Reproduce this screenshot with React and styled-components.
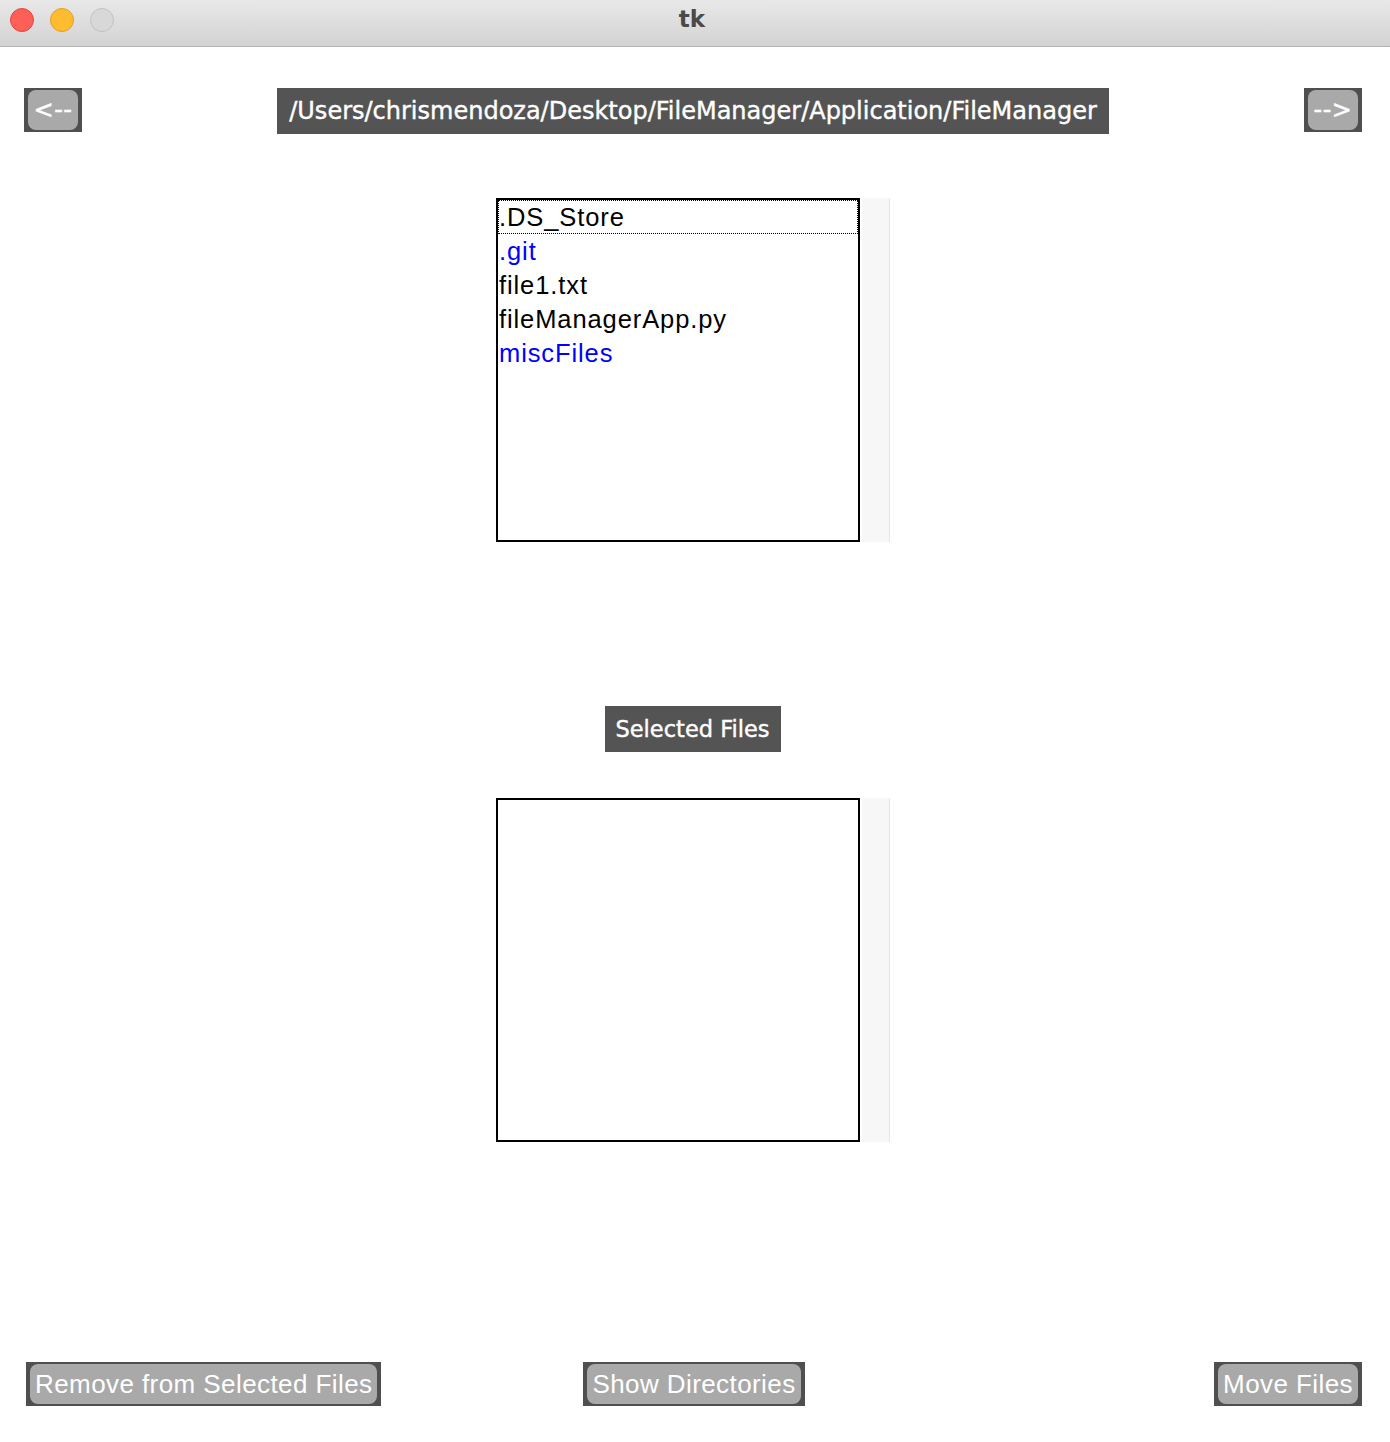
import React from "react";
import styled, { createGlobalStyle } from "styled-components";

const Global = createGlobalStyle`
  html, body { margin: 0; padding: 0; background: #ffffff; }
  body { font-family: "Liberation Sans", Arial, sans-serif; }
`;

const Window = styled.div`
  width: 1390px;
  height: 1442px;
  display: flex;
  flex-direction: column;
  background: #ffffff;
  overflow: hidden;
`;

const TitleBar = styled.div`
  height: 46px;
  flex: none;
  display: flex;
  align-items: center;
  position: relative;
  background: linear-gradient(#e8e8e8, #d3d3d3);
  border-bottom: 1px solid #b4b4b4;
`;

const Lights = styled.div`
  display: flex;
  gap: 16px;
  padding-left: 10px;
  padding-bottom: 6px;
`;

const Light = styled.span`
  width: 24px;
  height: 24px;
  box-sizing: border-box;
  border-radius: 50%;
  background: ${(p) => p.$bg};
  border: 1px solid ${(p) => p.$bd};
`;

const Title = styled.div`
  position: absolute;
  left: 0;
  right: 0;
  top: 0;
  height: 38px;
  display: flex;
  align-items: center;
  justify-content: center;
  padding-right: 6px;
  font-family: "DejaVu Sans", "Open Sans", sans-serif;
  font-weight: bold;
  font-size: 23px;
  color: #4a4a4a;
  pointer-events: none;
`;

const Content = styled.div`
  display: flex;
  flex-direction: column;
  padding: 41px 28px 0 24px;
`;

const NavRow = styled.div`
  display: flex;
  justify-content: space-between;
  align-items: flex-start;
`;

const ButtonFrame = styled.div`
  box-sizing: border-box;
  height: 44px;
  padding: 2px 4px;
  background: #4f4f4f;
  display: flex;
`;

const ButtonFace = styled.button`
  flex: 1;
  border: none;
  margin: 0;
  border-radius: 8px;
  background: #a9a9a9;
  color: #ffffff;
  display: flex;
  align-items: center;
  justify-content: center;
  padding: 0 ${(p) => (p.$arrow ? "2px" : "5px")};
  font-family: ${(p) =>
    p.$arrow
      ? `"DejaVu Sans", "Open Sans", sans-serif`
      : `"Liberation Sans", Arial, sans-serif`};
  font-size: ${(p) => (p.$arrow ? "24px" : "26px")};
  letter-spacing: ${(p) => (p.$arrow ? "0.5px" : "0.42px")};
  -webkit-text-stroke: ${(p) => (p.$arrow ? "0.5px #fff" : "0")};
  white-space: nowrap;
  line-height: 1;
`;

const ArrowFrame = styled(ButtonFrame)`
  width: 58px;
`;

const Label = styled.div`
  box-sizing: border-box;
  height: 46px;
  background: #545454;
  color: #ffffff;
  display: flex;
  align-items: center;
  padding: 0 12px 0 12px;
  font-family: "DejaVu Sans", "Open Sans", sans-serif;
  font-size: ${(p) => p.$size || 24}px;
  -webkit-text-stroke: 0.4px #fff;
  white-space: nowrap;
`;

const CenterLabel = styled(Label)`
  align-self: center;
  margin-top: ${(p) => p.$top}px;
  padding: 0 11px 0 10px;
`;

const ListArea = styled.div`
  display: flex;
  justify-content: center;
  margin-top: ${(p) => p.$top}px;
`;

const ListBox = styled.div`
  box-sizing: border-box;
  width: 364px;
  height: 344px;
  border: 2px solid #000000;
  display: flex;
  flex-direction: column;
  background: #ffffff;
`;

const Item = styled.div`
  box-sizing: border-box;
  height: 34px;
  display: flex;
  align-items: center;
  padding-left: 0;
  font-family: "Liberation Sans", Arial, sans-serif;
  font-size: 25.5px;
  letter-spacing: 0.9px;
  color: ${(p) => (p.$dir ? "#0000ff" : "#000000")};
  border: 1px ${(p) => (p.$focus ? "dotted #000" : "solid transparent")};
  white-space: nowrap;
`;

const ScrollTrack = styled.div`
  box-sizing: border-box;
  width: 30px;
  height: 344px;
  background: #f7f7f7;
  border-left: 2px solid #ffffff;
  border-right: 1px solid #e6e6e6;
`;

const BottomRow = styled.div`
  display: grid;
  grid-template-columns: 1fr auto 1fr;
  align-items: center;
  margin-top: 220px;
  padding-left: 2px;
`;

const Slot = styled.div`
  display: flex;
  justify-content: ${(p) => p.$justify};
`;

const files = [
  { name: ".DS_Store", dir: false },
  { name: ".git", dir: true },
  { name: "file1.txt", dir: false },
  { name: "fileManagerApp.py", dir: false },
  { name: "miscFiles", dir: true },
];

function ActionButton({ children }) {
  return (
    <ButtonFrame>
      <ButtonFace>{children}</ButtonFace>
    </ButtonFrame>
  );
}

export default function App() {
  return (
    <>
      <Global />
      <Window>
        <TitleBar>
          <Lights>
            <Light $bg="#fe5f57" $bd="#e2463f" />
            <Light $bg="#febc2e" $bd="#dfa023" />
            <Light $bg="#d8d8d8" $bd="#c2c2c2" />
          </Lights>
          <Title>tk</Title>
        </TitleBar>
        <Content>
          <NavRow>
            <ArrowFrame>
              <ButtonFace $arrow>&lt;--</ButtonFace>
            </ArrowFrame>
            <Label>/Users/chrismendoza/Desktop/FileManager/Application/FileManager</Label>
            <ArrowFrame>
              <ButtonFace $arrow>--&gt;</ButtonFace>
            </ArrowFrame>
          </NavRow>

          <ListArea $top={64}>
            <ListBox>
              {files.map((f, i) => (
                <Item key={f.name} $dir={f.dir} $focus={i === 0}>
                  {f.name}
                </Item>
              ))}
            </ListBox>
            <ScrollTrack />
          </ListArea>

          <CenterLabel $top={164} $size={22.5}>Selected Files</CenterLabel>

          <ListArea $top={46}>
            <ListBox />
            <ScrollTrack />
          </ListArea>

          <BottomRow>
            <Slot $justify="flex-start">
              <ActionButton>Remove from Selected Files</ActionButton>
            </Slot>
            <Slot $justify="center">
              <ActionButton>Show Directories</ActionButton>
            </Slot>
            <Slot $justify="flex-end">
              <ActionButton>Move Files</ActionButton>
            </Slot>
          </BottomRow>
        </Content>
      </Window>
    </>
  );
}
